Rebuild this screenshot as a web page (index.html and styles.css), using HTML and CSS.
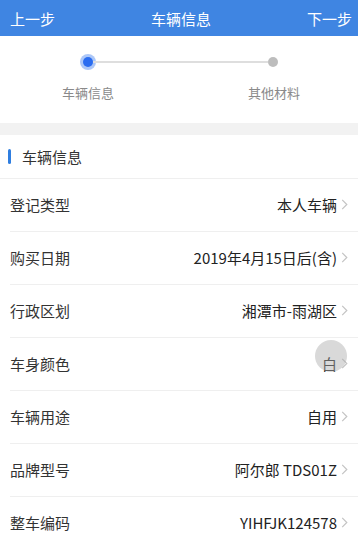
FILE: index.html
```html
<!DOCTYPE html>
<html lang="zh">
<head>
<meta charset="utf-8">
<link rel="stylesheet" href="styles.css">
</head>
<body>
<header class="nav">
  <span class="nav-btn">上一步</span>
  <span class="nav-title">车辆信息</span>
  <span class="nav-btn">下一步</span>
</header>
<section class="steps">
  <div class="track">
    <span class="dot active"></span>
    <span class="line"></span>
    <span class="dot"></span>
  </div>
  <div class="labels">
    <span class="step-label">车辆信息</span>
    <span class="step-label">其他材料</span>
  </div>
</section>
<div class="gap"></div>
<section class="card">
  <div class="card-title"><span class="bar"></span>车辆信息</div>
  <div class="row"><span class="label">登记类型</span><span class="value">本人车辆</span><svg class="chev" viewBox="0 0 7 12"><path d="M1 1l5 5-5 5" /></svg></div>
  <div class="row"><span class="label">购买日期</span><span class="value">2019年4月15日后(含)</span><svg class="chev" viewBox="0 0 7 12"><path d="M1 1l5 5-5 5" /></svg></div>
  <div class="row"><span class="label">行政区划</span><span class="value">湘潭市-雨湖区</span><svg class="chev" viewBox="0 0 7 12"><path d="M1 1l5 5-5 5" /></svg></div>
  <div class="row"><span class="label">车身颜色</span><span class="value">白</span><svg class="chev" viewBox="0 0 7 12"><path d="M1 1l5 5-5 5" /></svg><span class="touch"></span></div>
  <div class="row"><span class="label">车辆用途</span><span class="value">自用</span><svg class="chev" viewBox="0 0 7 12"><path d="M1 1l5 5-5 5" /></svg></div>
  <div class="row"><span class="label">品牌型号</span><span class="value">阿尔郎 TDS01Z</span><svg class="chev" viewBox="0 0 7 12"><path d="M1 1l5 5-5 5" /></svg></div>
  <div class="row"><span class="label">整车编码</span><span class="value">YIHFJK124578</span><svg class="chev" viewBox="0 0 7 12"><path d="M1 1l5 5-5 5" /></svg></div>
</section>
</body>
</html>
```

FILE: styles.css
```css
* { box-sizing: border-box; }
html, body { margin: 0; padding: 0; }
body {
  width: 358px;
  height: 545px;
  overflow: hidden;
  background: #fff;
  font-family: "Noto Sans CJK SC", "Noto Sans", sans-serif;
  color: #333;
}
.nav {
  height: 36px;
  background: #3f85e2;
  display: flex;
  align-items: center;
  justify-content: space-between;
  padding: 0 6px 0 10px;
  color: #fff;
  font-size: 15px;
}
.nav-title { font-size: 15px; }
.steps {
  height: 87px;
  padding-top: 19px;
}
.track {
  display: flex;
  align-items: center;
  padding: 0 80px 0 80px;
  height: 14px;
}
.dot {
  width: 10px;
  height: 10px;
  border-radius: 50%;
  background: #bdbdbd;
  flex: none;
}
.dot.active {
  background: #2a6cf0;
  box-shadow: 0 0 0 3px rgba(70, 130, 240, 0.45);
  margin-left: 3px;
}
.line {
  flex: 1;
  height: 2px;
  background: #dedede;
}
.labels {
  display: flex;
  justify-content: space-between;
  padding: 0 58px 0 62px;
  margin-top: 14px;
}
.step-label {
  font-size: 13px;
  color: #8a8a8a;
}
.gap {
  height: 12px;
  background: #f2f2f2;
}
.card-title {
  height: 44px;
  display: flex;
  align-items: center;
  font-size: 15px;
  color: #333;
  border-bottom: 1px solid #efefef;
  padding-left: 8px;
}
.bar {
  width: 3px;
  height: 15px;
  border-radius: 2px;
  background: #2f7ee0;
  margin-right: 11px;
}
.row {
  position: relative;
  height: 53px;
  margin-left: 10px;
  display: flex;
  align-items: center;
  border-bottom: 1px solid #efefef;
  padding-right: 10px;
  padding-bottom: 2px;
  font-size: 15px;
}
.label { flex: 1; color: #333; }
.value { color: #222; }
.chev {
  width: 7px;
  height: 11px;
  margin-left: 4px;
  fill: none;
  stroke: #c4c4c4;
  stroke-width: 1.3;
}
.touch {
  position: absolute;
  right: 11px;
  top: 2px;
  width: 32px;
  height: 32px;
  border-radius: 50%;
  background: rgba(170, 170, 170, 0.45);
}
```
